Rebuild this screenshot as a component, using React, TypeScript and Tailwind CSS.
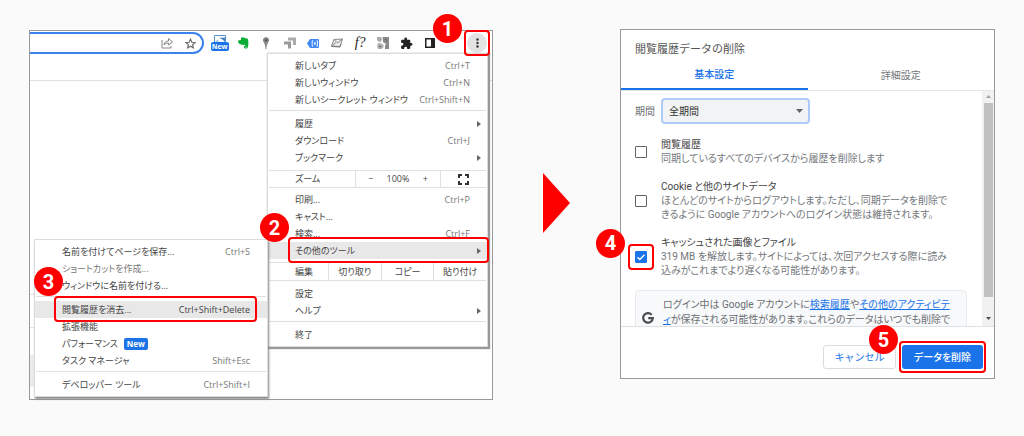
import type { ReactNode } from "react";

function StepBadge({ n, className }: { n: number; className: string }) {
  return (
    <span
      className={
        "pointer-events-none absolute z-30 flex size-[29px] items-center justify-center rounded-full bg-[#ff0000] font-['Roboto','Liberation_Sans',sans-serif] text-[20px] leading-none font-bold text-white " +
        className
      }
    >
      {n}
    </span>
  );
}

function Highlight({ className }: { className: string }) {
  return (
    <span
      aria-hidden="true"
      className={"pointer-events-none absolute z-20 rounded-[4px] border-2 border-[#ff0000] " + className}
    />
  );
}

function Separator() {
  return <li role="separator" className="mx-px mt-[2px] mb-1 h-px bg-[#dfe0e2]" />;
}

type ItemProps = {
  label: string;
  shortcut?: string;
  arrow?: boolean;
  active?: boolean;
  muted?: boolean;
  tag?: string;
  children?: ReactNode;
};

function Item({ label, shortcut, arrow, active, muted, tag, children }: ItemProps) {
  return (
    <li className="relative">
      <button
        type="button"
        className={
          "relative flex h-[17px] w-full items-center pr-[17px] pl-[27px] text-left whitespace-nowrap " +
          (active ? "bg-[#e8e8e8] " : "") +
          (muted ? "text-[#777]" : "text-[#444]")
        }
      >
        <span>{label}</span>
        {tag && (
          <span className="ml-[6px] rounded-[2px] bg-[#1a73e8] px-[3px] text-[8px] leading-3 font-bold text-white">
            {tag}
          </span>
        )}
        {shortcut && <span className={"ml-auto " + (active ? "text-[#444]" : "text-[#777]")}>{shortcut}</span>}
        {arrow && (
          <svg className="absolute right-[6px] h-[6px] w-1" viewBox="0 0 4 6" fill="#666">
            <path d="M0 0L4 3L0 6Z" />
          </svg>
        )}
      </button>
      {children}
    </li>
  );
}

const menuBox =
  "absolute border border-[#dcdcdc] bg-white py-[3px] font-['Open_Sans','Noto_Sans_CJK_JP',sans-serif] text-[9px] leading-3 [font-feature-settings:'palt']";

function SubMenu() {
  return (
    <ul className={menuBox + " top-[-3px] right-full w-[234px] shadow-[1px_2px_2px_#888]"}>
      <Item label="名前を付けてページを保存..." shortcut="Ctrl+S" />
      <Item label="ショートカットを作成..." muted />
      <Item label="ウィンドウに名前を付ける..." />
      <Separator />
      <Item label="閲覧履歴を消去..." shortcut="Ctrl+Shift+Delete" active>
        <Highlight className="-top-[5px] right-[10px] -bottom-[4px] left-[19px]" />
        <StepBadge n={3} className="-top-[34px] -left-px" />
      </Item>
      <Item label="拡張機能" />
      <Item label="パフォーマンス" tag="New" />
      <Item label="タスク マネージャ" shortcut="Shift+Esc" />
      <Separator />
      <Item label="デベロッパー ツール" shortcut="Ctrl+Shift+I" />
    </ul>
  );
}

function MainMenu() {
  return (
    <ul className={menuBox + " top-[22px] right-1 z-10 w-[221px] shadow-[1px_1px_1px_1px_#999]"}>
      <Item label="新しいタブ" shortcut="Ctrl+T" />
      <Item label="新しいウィンドウ" shortcut="Ctrl+N" />
      <Item label="新しいシークレット ウィンドウ" shortcut="Ctrl+Shift+N" />
      <Separator />
      <Item label="履歴" arrow />
      <Item label="ダウンロード" shortcut="Ctrl+J" />
      <Item label="ブックマーク" arrow />
      <li className="mx-px mt-1 mb-[3px] flex h-[18px] items-stretch border-y border-[#dfe0e2] text-[#444]">
        <span className="flex w-[87px] items-center border-r border-[#dfe0e2] pl-[26px]">ズーム</span>
        <span className="flex flex-1 items-center justify-between border-r border-[#dfe0e2] px-[12px]">
          <button type="button" aria-label="縮小">−</button>
          <span>100%</span>
          <button type="button" aria-label="拡大">+</button>
        </span>
        <button type="button" aria-label="全画面表示" className="flex w-[45px] items-center justify-center">
          <svg className="size-[11px]" viewBox="0 0 11 11" fill="none" stroke="#333" strokeWidth="2">
            <path d="M1 4V1H4M7 1H10V4M10 7V10H7M4 10H1V7" />
          </svg>
        </button>
      </li>
      <Item label="印刷..." shortcut="Ctrl+P" />
      <Item label="キャスト..." />
      <Item label="検索..." shortcut="Ctrl+F" />
      <Item label="その他のツール" arrow active>
        <Highlight className="-top-[5px] -right-[2px] -bottom-[4px] left-[20px]" />
        <StepBadge n={2} className="-top-[29px] -left-[8px]" />
        <SubMenu />
      </Item>
      <li className="mx-px mt-[3px] mb-1 flex h-[19px] items-stretch border-y border-[#dfe0e2] text-[#444]">
        <span className="flex w-[60px] items-center border-r border-[#dfe0e2] pl-[26px]">編集</span>
        <button type="button" className="flex-1 border-r border-[#dfe0e2]">切り取り</button>
        <button type="button" className="flex-1 border-r border-[#dfe0e2]">コピー</button>
        <button type="button" className="flex-1">貼り付け</button>
      </li>
      <Item label="設定" />
      <Item label="ヘルプ" arrow />
      <Separator />
      <Item label="終了" />
    </ul>
  );
}

function Extensions() {
  const cell = "flex items-center justify-center";
  return (
    <div className="grid w-[234px] shrink-0 grid-cols-10">
      <span className={cell}>
        <span className="relative h-4 w-[18px]">
          <svg className="absolute top-0 left-[3px] h-2 w-3" viewBox="0 0 12 8">
            <path d="M0.500 0.500H11.500V8H0.500Z" fill="#fff" stroke="#5b93c8" />
            <path d="M5 3L11 2.500V7.500C10 5 8 4 5 3Z" fill="#3f7fbd" />
            <path d="M1 7L4 4L5 8H1Z" fill="#a9c6e2" />
          </svg>
          <span className="absolute bottom-0 left-0 flex h-[9px] w-[18px] items-center justify-center rounded-[2px] bg-[#1a73e8] font-['Open_Sans',sans-serif] text-[7px] leading-none font-bold text-white">
            New
          </span>
        </span>
      </span>
      <span className={cell}>
        <svg className="h-3 w-[11px]" viewBox="0 0 11 12">
          <path
            d="M3 1C4 0 6 0 6.500 1C8 1.200 9.500 1.200 10 2.500C10.600 5 10.500 8 9.800 10.500C9.500 12 6 12 5.800 10.300C5.700 9.200 6.500 8.600 7.500 8.700L6.500 7.500C6 8 4.500 8 3 7.600C1 7.200 0 5.500 0 3.500L3 3Z"
            fill="#08ad36"
          />
          <path d="M7.300 10.200H8.800" stroke="#fff" strokeWidth="0.700" />
        </svg>
      </span>
      <span className={cell}>
        <svg className="h-3 w-2" viewBox="0 0 8 12">
          <path d="M4 0A3.300 3.300 0 0 1 6.800 4.500C6 6 4.800 7 4.500 12H3.500C3.200 7 2 6 1.200 4.500A3.300 3.300 0 0 1 4 0Z" fill="#8a8a8a" />
          <circle cx="4" cy="3.300" r="1.200" fill="#555" />
        </svg>
      </span>
      <span className={cell}>
        <svg className="h-3 w-3" viewBox="0 0 12 12" fill="none" strokeWidth="3">
          <path d="M4 2H10.500V8" stroke="#aaa" />
          <path d="M0 6H5.500V11.500" stroke="#999" />
        </svg>
      </span>
      <span className={cell}>
        <svg className="h-[9px] w-3" viewBox="0 0 12 9">
          <path d="M3 0H11A1 1 0 0 1 12 1V8A1 1 0 0 1 11 9H3L0 4.500Z" fill="#4089f5" />
          <path d="M6.200 1.800H5.200V7.200H6.200M9.500 1.800H10.500V7.200H9.500" stroke="#fff" fill="none" strokeWidth="0.900" />
          <path d="M7.300 3H8.600V6H7.300Z" fill="#fff" />
        </svg>
      </span>
      <span className={cell}>
        <svg className="h-[10px] w-3" viewBox="0 0 12 10" fill="none" stroke="#888">
          <path d="M3 1.500L11.500 1L9 8.500L0.500 8Z" fill="#eee" />
          <path d="M3 1.500L6.500 5L11.500 1M0.500 8L5 4.500" />
          <path d="M0.500 8.500L9 9L10 6" stroke="#777" />
        </svg>
      </span>
      <span className={cell + " font-['Liberation_Serif',serif] text-[14px] leading-none text-[#222] italic"}>f?</span>
      <span className={cell}>
        <svg className="size-3" viewBox="0 0 12 12">
          <path d="M5.500 0H12V12H8V9L9 7L6 5Z" fill="#8a8a8a" />
          <path d="M0 0H4L5 2L4 4.500L2 5L0 3Z" fill="#aaa" />
          <path d="M1 6L5 6.500L7 9L5 12H1L0 9Z" fill="#b0b0b0" />
          <path d="M8 2L10 3.500M2 9L4 10" stroke="#555" />
        </svg>
      </span>
      <span className={cell}>
        <svg className="size-[13px]" viewBox="0 0 24 24" fill="#222">
          <path d="M20.500 11H19V7c0-1.100-.9-2-2-2h-4V3.500a2.500 2.500 0 0 0-5 0V5H4c-1.100 0-2 .9-2 2v3.800h1.500a2.700 2.700 0 0 1 0 5.400H2V20c0 1.100.9 2 2 2h3.800v-1.500a2.700 2.700 0 0 1 5.400 0V22H17c1.100 0 2-.9 2-2v-4h1.500a2.500 2.500 0 0 0 0-5z" />
        </svg>
      </span>
      <span className={cell}>
        <svg className="h-[10px] w-[10px]" viewBox="0 0 10 10">
          <path d="M0 0H10V10H0ZM1.500 1.500V8.500H6V1.500Z" fill="#222" fillRule="evenodd" />
        </svg>
      </span>
    </div>
  );
}

function BrowserWindow() {
  return (
    <section className="relative mt-px flex min-h-[370px] flex-col border border-[#999] bg-white">
      <div className="relative flex h-[50px] items-start border-b border-[#dfe0e2]">
        <div className="mt-px flex h-[22px] min-w-0 flex-1 items-center justify-end gap-3 rounded-r-full border-2 border-l-0 border-[#3b82ee] pr-[6px]">
          <svg className="size-3" viewBox="0 0 12 12" fill="none" stroke="#888" strokeWidth="1">
            <path d="M1 3V11H10V9" />
            <path d="M3 8C3.500 5 5 4 7.500 4V1.500L11.500 5L7.500 8V6C5.500 6 4 6.500 3 8Z" />
          </svg>
          <svg className="size-[11px]" viewBox="0 0 24 24" fill="none" stroke="#666" strokeWidth="2.400">
            <path d="M12 2.500L14.900 9.200L22 9.800L16.600 14.500L18.200 21.500L12 17.800L5.800 21.500L7.400 14.500L2 9.800L9.100 9.200Z" />
          </svg>
        </div>
        <div className="ml-1 flex h-6">
          <Extensions />
        </div>
        <div className="relative mt-[2px] mr-[5px] ml-[25px] flex size-5 items-center justify-center self-start rounded-full bg-[#e3e3e3]">
          <button type="button" aria-label="メニュー" className="flex size-5 items-center justify-center">
            <svg className="h-[10px] w-[3px]" viewBox="0 0 3 10" fill="#333">
              <circle cx="1.500" cy="1.500" r="1.200" />
              <circle cx="1.500" cy="5" r="1.200" />
              <circle cx="1.500" cy="8.500" r="1.200" />
            </svg>
          </button>
          <Highlight className="-inset-[3px]" />
          <StepBadge n={1} className="-top-[19px] -left-[34px]" />
        </div>
        <MainMenu />
      </div>
      <div className="mt-[213px] h-[34px] w-1 border-y border-[#e4e4e4]" />
      <div className="mt-[27px] h-8 w-1 bg-[#ececee]" />
    </section>
  );
}

type OptionProps = { id: string; title: string; lines: string[]; checked?: boolean; children?: ReactNode };

function Option({ id, title, lines, checked, children }: OptionProps) {
  return (
    <div className="flex items-center">
      <span className="relative mr-[14px] flex size-3">
        <input
          id={id}
          type="checkbox"
          defaultChecked={checked}
          className="peer size-3 appearance-none rounded-[1px] border-[1.5px] border-[#5f6368] bg-white checked:border-[#1a73e8] checked:bg-[#1a73e8]"
        />
        <svg
          className="pointer-events-none absolute inset-0 hidden size-3 peer-checked:block"
          viewBox="0 0 12 12"
          fill="none"
          stroke="#fff"
          strokeWidth="1.400"
        >
          <path d="M2.500 6.200L4.800 8.500L9.500 3.700" />
        </svg>
        {children}
      </span>
      <label htmlFor={id} className="whitespace-nowrap">
        <span className="block leading-[15px] text-[#444]">{title}</span>
        {lines.map((line) => (
          <span key={line} className="block leading-[14px] text-[#74777b]">
            {line}
          </span>
        ))}
      </label>
    </div>
  );
}

function ClearDataDialog() {
  return (
    <section
      role="dialog"
      aria-label="閲覧履歴データの削除"
      className="flex flex-col self-start border border-[#999] bg-white font-['Roboto','Noto_Sans_CJK_JP',sans-serif] text-[10px] text-[#6b6f73]"
    >
      <h2 className="px-[14px] pt-[12px] text-[11px] leading-4 text-[#555]">閲覧履歴データの削除</h2>
      <div role="tablist" className="mt-[3px] grid h-[30px] grid-cols-2 border-b border-[#e4e5e7]">
        <button role="tab" aria-selected="true" type="button" className="h-[29px] border-b-2 border-[#1a73e8] font-medium text-[#1a73e8]">
          基本設定
        </button>
        <button role="tab" aria-selected="false" type="button" className="text-[#74777b]">
          詳細設定
        </button>
      </div>
      <div className="flex">
        <div className="min-w-0 flex-1 pr-[15px] pl-[14px]">
          <div className="mt-[7px] flex items-center">
            <label htmlFor="range" className="w-[26px] whitespace-nowrap">
              期間
            </label>
            <span className="relative flex w-[149px] items-center">
              <select
                id="range"
                className="h-[26px] w-full appearance-none rounded-[4px] border-2 border-[#aecbfa] bg-[#f1f3f4] pl-[6px] text-[#333]"
              >
                <option>全期間</option>
              </select>
              <svg className="pointer-events-none absolute right-[7px] h-1 w-[7px]" viewBox="0 0 7 4" fill="#5f6368">
                <path d="M0 0H7L3.500 4Z" />
              </svg>
            </span>
          </div>
          <div className="mt-[13px] flex flex-col gap-[13px] [font-feature-settings:'palt']">
            <Option id="history" title="閲覧履歴" lines={["同期しているすべてのデバイスから履歴を削除します"]} />
            <Option
              id="cookies"
              title="Cookie と他のサイトデータ"
              lines={[
                "ほとんどのサイトからログアウトします。ただし、同期データを削除で",
                "きるように Google アカウントへのログイン状態は維持されます。",
              ]}
            />
            <Option
              id="cache"
              title="キャッシュされた画像とファイル"
              lines={[
                "319 MB を解放します。サイトによっては、次回アクセスする際に読み",
                "込みがこれまでより遅くなる可能性があります。",
              ]}
              checked
            >
              <Highlight className="-inset-[7px]" />
              <StepBadge n={4} className="-top-[22px] -left-[39px]" />
            </Option>
          </div>
          <div className="mt-3 h-9 overflow-hidden [font-feature-settings:'palt']">
            <div className="flex h-14 items-center gap-[9px] rounded-[4px] border border-[#e8eaed] bg-[#f8f9fa] pl-[6px]">
              <svg className="size-3 shrink-0" viewBox="0 0 12 12" fill="none" stroke="#4a4d51" strokeWidth="2.200">
                <path d="M9.700 2.800A4.800 4.800 0 1 0 10.800 6.200H6.200" />
              </svg>
              <p className="self-start pt-[6px] leading-[15px] whitespace-nowrap">
                ログイン中は Google アカウントに
                <a href="#history" className="text-[#1a73e8] underline">検索履歴</a>や
                <a href="#activity" className="text-[#1a73e8] underline">
                  その他のアクティビテ
                  <br />ィ
                </a>
                が保存される可能性があります。これらのデータはいつでも削除で
              </p>
            </div>
          </div>
        </div>
        <div aria-hidden="true" className="flex w-[12px] flex-col items-center bg-[#f1f1f1]">
          <svg className="mt-1 mb-[5px] h-[3px] w-[5px]" viewBox="0 0 5 3" fill="#a0a0a0">
            <path d="M0 3L2.500 0L5 3Z" />
          </svg>
          <div className="w-[9px] flex-1 bg-[#c1c1c1]" />
          <svg className="mt-[20px] mb-[6px] h-[3px] w-[5px]" viewBox="0 0 5 3" fill="#505050">
            <path d="M0 0L2.500 3L5 0Z" />
          </svg>
        </div>
      </div>
      <div className="flex h-[52px] items-start justify-end gap-[6px] border-t border-[#dfe0e2] pt-[18px] pr-[11px]">
        <button type="button" className="h-6 w-[73px] rounded-[3px] border border-[#dadce0] whitespace-nowrap text-[#1a73e8]">
          キャンセル
        </button>
        <span className="relative flex">
          <button type="button" className="h-6 w-[81px] rounded-[3px] bg-[#1a73e8] font-medium whitespace-nowrap text-white [font-feature-settings:'palt']">
            データを削除
          </button>
          <Highlight className="-inset-x-[3px] -inset-y-1" />
          <StepBadge n={5} className="-top-5 -left-[33px]" />
        </span>
      </div>
    </section>
  );
}

export default function App() {
  return (
    <main className="grid min-h-screen grid-cols-[464fr_127fr_375fr] items-start bg-[#fafafa] px-[29px] pt-[29px]">
      <BrowserWindow />
      <div className="flex justify-center self-start pt-[144px]">
        <svg className="h-[60px] w-[27px]" viewBox="0 0 27 60" fill="#ff0000" aria-hidden="true">
          <path d="M0 0L27 30L0 60Z" />
        </svg>
      </div>
      <ClearDataDialog />
    </main>
  );
}
